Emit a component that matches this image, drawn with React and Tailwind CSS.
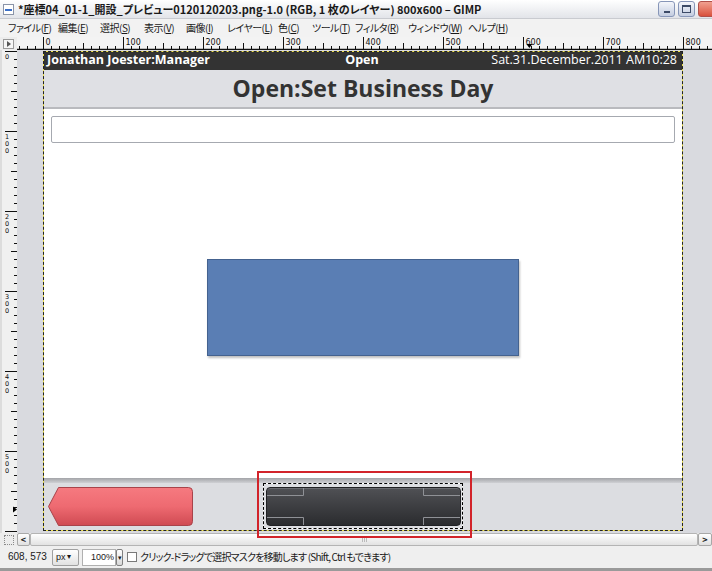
import React from 'react';

const JP = "font-['Noto_Sans_CJK_JP',sans-serif] [font-feature-settings:'palt']";

const MENU = [
  { label: 'ファイル', key: 'F', w: 'w-[50px]' },
  { label: '編集', key: 'E', w: 'w-[42px]' },
  { label: '選択', key: 'S', w: 'w-[44px]' },
  { label: '表示', key: 'V', w: 'w-[42px]' },
  { label: '画像', key: 'I', w: 'w-[41px]' },
  { label: 'レイヤー', key: 'L', w: 'w-[51px]' },
  { label: '色', key: 'C', w: 'w-[34px]' },
  { label: 'ツール', key: 'T', w: 'w-[43px]' },
  { label: 'フィルタ', key: 'R', w: 'w-[53px]' },
  { label: 'ウィンドウ', key: 'W', w: 'w-[60px]' },
  { label: 'ヘルプ', key: 'H', w: 'w-[50px]' },
];

function WinButton({ kind }) {
  if (kind === 'close') {
    return (
      <div className="w-[17px] h-[16px] rounded-[3px] border border-[#b0504a] bg-linear-to-b from-[#f0a090] to-[#d8503c]" />
    );
  }
  return (
    <div className="w-[17px] h-[16px] rounded-[3px] border border-[#8796b8] bg-linear-to-b from-[#f4f6fb] to-[#c4cde0] flex items-center justify-center">
      {kind === 'min' ? (
        <div className="w-[6px] h-[2px] bg-[#3c4a66] mt-[6px]" />
      ) : (
        <div className="w-[9px] h-[8px] border border-[#3c4a66] border-t-2" />
      )}
    </div>
  );
}

function HRuler() {
  const ticks = [];
  const labels = [];
  for (let v = -30; v <= 840; v += 10) {
    const x = Math.round(26 + v * 0.8) + 0.5;
    const len = v % 100 === 0 ? 12 : v % 50 === 0 ? 6 : 3;
    ticks.push(<line key={v} x1={x} x2={x} y1={12 - len} y2={12} stroke="#111" strokeWidth="1" />);
    if (v % 100 === 0 && v >= 0) {
      labels.push(
        <text key={'l' + v} x={x + 2} y={7.5} fontSize="8" fill="#111" fontFamily="DejaVu Sans, sans-serif">
          {v}
        </text>
      );
    }
  }
  const mx = 26 + 608 * 0.8;
  return (
    <svg width="695" height="13" className="block bg-[#f3f3f3]">
      {ticks}
      {labels}
      <line x1="0" x2="695" y1="12.5" y2="12.5" stroke="#111" strokeWidth="1.5" />
      <polygon points={`${mx - 3},7 ${mx + 3},7 ${mx},11`} fill="#000" />
    </svg>
  );
}

function VRuler() {
  const ticks = [];
  const labels = [];
  for (let v = 0; v <= 600; v += 10) {
    const y = Math.round(1 + v * 0.8) + 0.5;
    const len = v % 100 === 0 ? 13 : v % 50 === 0 ? 7 : 4;
    ticks.push(<line key={v} x1={16 - len} x2={16} y1={y} y2={y} stroke="#111" strokeWidth="1" />);
    if (v % 100 === 0 && v < 600) {
      labels.push(
        <text key={'l' + v} x={3} y={y + 1} fontSize="6.5" fill="#111" fontFamily="DejaVu Sans, sans-serif">
          {String(v)
            .split('')
            .map((d, i) => (
              <tspan key={i} x={3} dy={i === 0 ? 6 : 7}>
                {d}
              </tspan>
            ))}
        </text>
      );
    }
  }
  const my = 1 + 573 * 0.8;
  return (
    <svg width="17" height="483" className="block bg-[#f0f0f0] border-l-2 border-[#dcdcdc]">
      {ticks}
      {labels}
      <line x1="16" x2="16" y1="0" y2="483" stroke="#111" strokeWidth="1.5" />
      <polygon points={`11,${my - 3} 11,${my + 3} 15,${my}`} fill="#000" />
    </svg>
  );
}

function RedButton() {
  return (
    <svg width="145" height="39" className="block">
      <defs>
        <linearGradient id="redg" x1="0" y1="0" x2="0" y2="1">
          <stop offset="0" stopColor="#f67a80" />
          <stop offset="0.5" stopColor="#ee6a71" />
          <stop offset="1" stopColor="#cf4a52" />
        </linearGradient>
      </defs>
      <path
        d="M10.5 0.5 H140.5 Q144.5 0.5 144.5 4.5 V34.5 Q144.5 38.5 140.5 38.5 H10.5 L0.5 19.5 Z"
        fill="url(#redg)"
        stroke="#a8434a"
        strokeWidth="1"
      />
    </svg>
  );
}

function DarkButton() {
  return (
    <div className="relative w-[195px] h-[39px] ml-[73px]">
      <div className="w-full h-full rounded-[4px] border border-[#202124] bg-linear-to-b from-[#505155] to-[#2b2c2f] shadow-[inset_0_1px_0_#6a6b70]" />
      <svg width="195" height="39" className="absolute inset-0">
        <g stroke="#8f9196" strokeWidth="1" fill="none">
          <polyline points="1,8.5 37.5,8.5 37.5,1" />
          <polyline points="194,8.5 157.5,8.5 157.5,1" />
          <polyline points="1,30.5 37.5,30.5 37.5,38" />
          <polyline points="194,30.5 157.5,30.5 157.5,38" />
        </g>
      </svg>
      <div className="absolute -left-[3px] -right-[2px] -top-[4px] -bottom-[3px] border border-white">
        <div className="absolute -inset-px border border-dashed border-black" />
      </div>
    </div>
  );
}

function Screen() {
  return (
    <div className="w-[640px] flex flex-col relative font-['Open_Sans',sans-serif]">
      <div className="h-[19px] bg-[#333333] grid grid-cols-3 items-center pl-[4px] pr-[6px] text-white text-[12.5px] leading-none">
        <span className="font-bold whitespace-nowrap">Jonathan Joester:Manager</span>
        <span className="font-bold text-center">Open</span>
        <span className="text-right whitespace-nowrap">Sat.31.December.2011 AM10:28</span>
      </div>
      <div className="h-[37px] bg-[#dfe0e4] flex items-center justify-center">
        <span className="text-[23px] font-bold text-[#333] leading-none">Open:Set Business Day</span>
      </div>
      <div className="h-[2px] bg-[#b9babe]" />
      <div className="h-[369px] bg-white flex flex-col">
        <div className="mx-[8px] mt-[7px] h-[27px] border border-[#a6a9b0] rounded-[2px] bg-white" />
        <div className="mt-[116px] mx-auto w-[312px] h-[97px] bg-[#5a7eb4] border border-[#44628f] shadow-[1px_2px_2px_rgba(0,0,0,0.25)]" />
      </div>
      <div className="h-[5px] bg-linear-to-b from-[#a3a4a8] to-[#cfd0d4]" />
      <div className="h-[48px] bg-[#dcdde1] flex items-start pt-[4px] pl-[5px]">
        <RedButton />
        <DarkButton />
      </div>
      <div className="absolute inset-0 border border-[#eee04a] pointer-events-none">
        <div className="absolute -inset-px border border-dashed border-[#222]" />
      </div>
    </div>
  );
}

export default function App() {
  return (
    <div className={`relative w-[712px] h-[571px] overflow-hidden flex flex-col bg-[#e6e6e6] ${JP}`}>
      {/* title bar */}
      <div className="h-[19px] flex items-center bg-linear-to-b from-[#ffffff] to-[#e2e4e9] border-b border-[#c9cbd0]">
        <svg width="11" height="11" className="ml-[3px] shrink-0">
          <rect x="0.5" y="0.5" width="10" height="10" fill="#fff" stroke="#8a94a8" />
          <rect x="2" y="5" width="7" height="2" fill="#3a6fc8" />
        </svg>
        <span className="ml-[4px] text-[11px] font-bold text-[#1a1a1a] whitespace-nowrap leading-none">
          *座標04_01-1_開設_プレビュー0120120203.png-1.0 (RGB, 1 枚のレイヤー) 800x600 – GIMP
        </span>
        <div className="ml-auto flex gap-[3px] mr-[-3px]">
          <WinButton kind="min" />
          <WinButton kind="max" />
          <WinButton kind="close" />
        </div>
      </div>

      {/* menu bar */}
      <div className="h-[18px] flex items-center pl-[8px] bg-[#f2f2f2] text-[10px] tracking-[-0.5px] text-[#1a1a1a] leading-none">
        {MENU.map((m) => (
          <span key={m.key} className={`${m.w} shrink-0 whitespace-nowrap`}>
            {m.label}(<span className="underline">{m.key}</span>)
          </span>
        ))}
      </div>

      {/* rulers row */}
      <div className="h-[13px] flex">
        <div className="w-[17px] flex items-center justify-center bg-[#ececec]">
          <div className="w-[11px] h-[10px] border border-[#9a9a9a] bg-[#f6f6f6] flex items-center justify-center">
            <div className="w-0 h-0 border-y-[3px] border-y-transparent border-l-[4px] border-l-[#555]" />
          </div>
        </div>
        <HRuler />
      </div>

      {/* canvas row */}
      <div className="h-[483px] flex">
        <VRuler />
        <div className="flex-1 bg-[#d9dadf] overflow-hidden">
          <div className="ml-[26px] mt-[1px]">
            <Screen />
          </div>
        </div>
      </div>

      {/* horizontal scrollbar */}
      <div className="h-[13px] flex bg-[#ececec]">
        <div className="w-[17px] flex items-center justify-center">
          <div className="w-[10px] h-[10px] border border-dotted border-[#8a8a8a]" />
        </div>
        <div className="w-[13px] border border-[#a8a8a8] rounded-[2px] bg-linear-to-b from-white to-[#e0e0e0] flex items-center justify-center text-[9px] font-bold text-[#222] leading-none">
          &lt;
        </div>
        <div className="flex-1 border border-[#b4b4b4] rounded-[2px] bg-linear-to-b from-white to-[#e2e2e2] flex items-center justify-center">
          <div className="flex gap-[1px]">
            <div className="w-px h-[4px] bg-[#bbb]" />
            <div className="w-px h-[4px] bg-[#bbb]" />
            <div className="w-px h-[4px] bg-[#bbb]" />
          </div>
        </div>
        <div className="w-[14px] border border-[#a8a8a8] rounded-[2px] bg-linear-to-b from-white to-[#e0e0e0] flex items-center justify-center text-[9px] font-bold text-[#222] leading-none">
          &gt;
        </div>
      </div>

      {/* status bar */}
      <div className="h-[25px] flex items-center bg-[#efefef] border-b-[3px] border-[#9a9a9a] text-[10px] text-[#1a1a1a] leading-none">
        <span className="ml-[8px] w-[44px] font-['Liberation_Sans',sans-serif] text-[10px]">608, 573</span>
        <div className="w-[27px] h-[17px] border border-[#a0a0a0] rounded-[2px] bg-linear-to-b from-white to-[#e2e2e2] flex items-center pl-[3px] text-[9px] font-['Liberation_Sans',sans-serif]">
          px<span className="text-[8px] ml-px">▾</span>
        </div>
        <div className="ml-[3px] w-[34px] h-[17px] bg-white border border-[#b0b0b0] flex items-center justify-end pr-[1px] text-[9px] font-['Liberation_Sans',sans-serif]">
          100%
        </div>
        <div className="w-[7px] h-[17px] border border-[#808080] rounded-[2px] bg-linear-to-b from-white to-[#d8d8d8] flex items-center justify-center text-[7px]">
          ▾
        </div>
        <div className="ml-[4px] w-[10px] h-[10px] border border-[#7a7a7a] bg-white" />
        <span className="ml-[3px] whitespace-nowrap tracking-[-0.8px]">クリック-ドラッグで選択マスクを移動します (Shift, Ctrl もできます)</span>
      </div>

      {/* annotation rectangle */}
      <div className="absolute left-[257px] top-[471px] w-[215px] h-[67px] border-2 border-[#d2232a] pointer-events-none" />
    </div>
  );
}
